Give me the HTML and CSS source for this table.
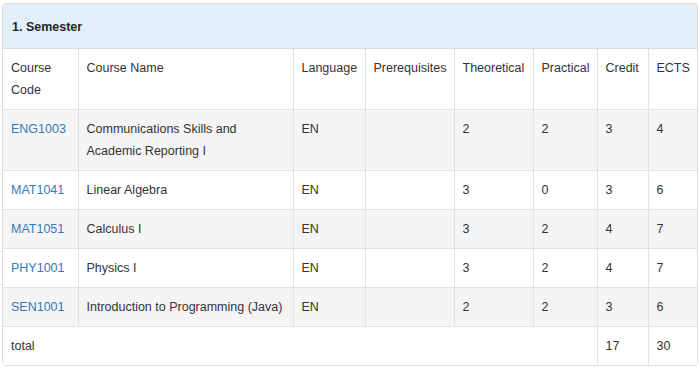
FILE: index.html
```html
<!DOCTYPE html>
<html>
<head>
<meta charset="utf-8">
<link rel="stylesheet" href="styles.css">
</head>
<body>
<div class="panel">
  <div class="panel-heading">1. Semester</div>
  <table class="courses">
    <colgroup>
      <col class="c-code"><col class="c-name"><col class="c-lang"><col class="c-pre">
      <col class="c-theo"><col class="c-prac"><col class="c-cred"><col class="c-ects">
    </colgroup>
    <thead>
      <tr>
        <th>Course Code</th><th>Course Name</th><th>Language</th><th>Prerequisites</th>
        <th>Theoretical</th><th>Practical</th><th>Credit</th><th>ECTS</th>
      </tr>
    </thead>
    <tbody>
      <tr>
        <td><a href="#">ENG1003</a></td><td>Communications Skills and Academic Reporting I</td><td>EN</td><td></td>
        <td>2</td><td>2</td><td>3</td><td>4</td>
      </tr>
      <tr>
        <td><a href="#">MAT1041</a></td><td>Linear Algebra</td><td>EN</td><td></td>
        <td>3</td><td>0</td><td>3</td><td>6</td>
      </tr>
      <tr>
        <td><a href="#">MAT1051</a></td><td>Calculus I</td><td>EN</td><td></td>
        <td>3</td><td>2</td><td>4</td><td>7</td>
      </tr>
      <tr>
        <td><a href="#">PHY1001</a></td><td>Physics I</td><td>EN</td><td></td>
        <td>3</td><td>2</td><td>4</td><td>7</td>
      </tr>
      <tr>
        <td><a href="#">SEN1001</a></td><td>Introduction to Programming (Java)</td><td>EN</td><td></td>
        <td>2</td><td>2</td><td>3</td><td>6</td>
      </tr>
      <tr class="total">
        <td colspan="6">total</td><td>17</td><td>30</td>
      </tr>
    </tbody>
  </table>
</div>
</body>
</html>
```
FILE: styles.css
```css
html, body {
  margin: 0;
  padding: 0;
  background: #fff;
}
body {
  font-family: "Liberation Sans", Arial, Helvetica, sans-serif;
  font-size: 12.5px;
  line-height: 22px;
  color: #333;
}
.panel {
  margin: 3px 2px 0 2px;
  width: 694px;
  border: 1px solid #dcdcdc;
  border-radius: 4px;
  overflow: hidden;
  background: #fff;
}
.panel-heading {
  background: #e2eff9;
  border-bottom: 1px solid #dcdcdc;
  padding: 12px 9px 10px 9px;
  font-weight: bold;
  color: #262626;
}
.courses {
  width: 694px;
  border-collapse: collapse;
  table-layout: fixed;
}
.c-code { width: 75px; }
.c-name { width: 215px; }
.c-lang { width: 72px; }
.c-pre { width: 89px; }
.c-theo { width: 79px; }
.c-prac { width: 64px; }
.c-cred { width: 51px; }
.c-ects { width: 49px; }
.courses th,
.courses td {
  border: 1px solid #e2e2e2;
  padding: 8px 8px 8px 8px;
  text-align: left;
  vertical-align: top;
  font-weight: normal;
}
.courses td:nth-child(2) { padding-right: 4px; }
.courses thead th { border-top: 0; }
.courses tr > :first-child { border-left: 0; }
.courses tr > :last-child { border-right: 0; }
.courses tbody tr:last-child td { border-bottom: 0; }
.courses tbody tr:nth-child(odd) { background: #f5f5f5; }
.courses tbody tr.total { background: #fff; }
.courses a {
  color: #337ab7;
  text-decoration: none;
}
```
